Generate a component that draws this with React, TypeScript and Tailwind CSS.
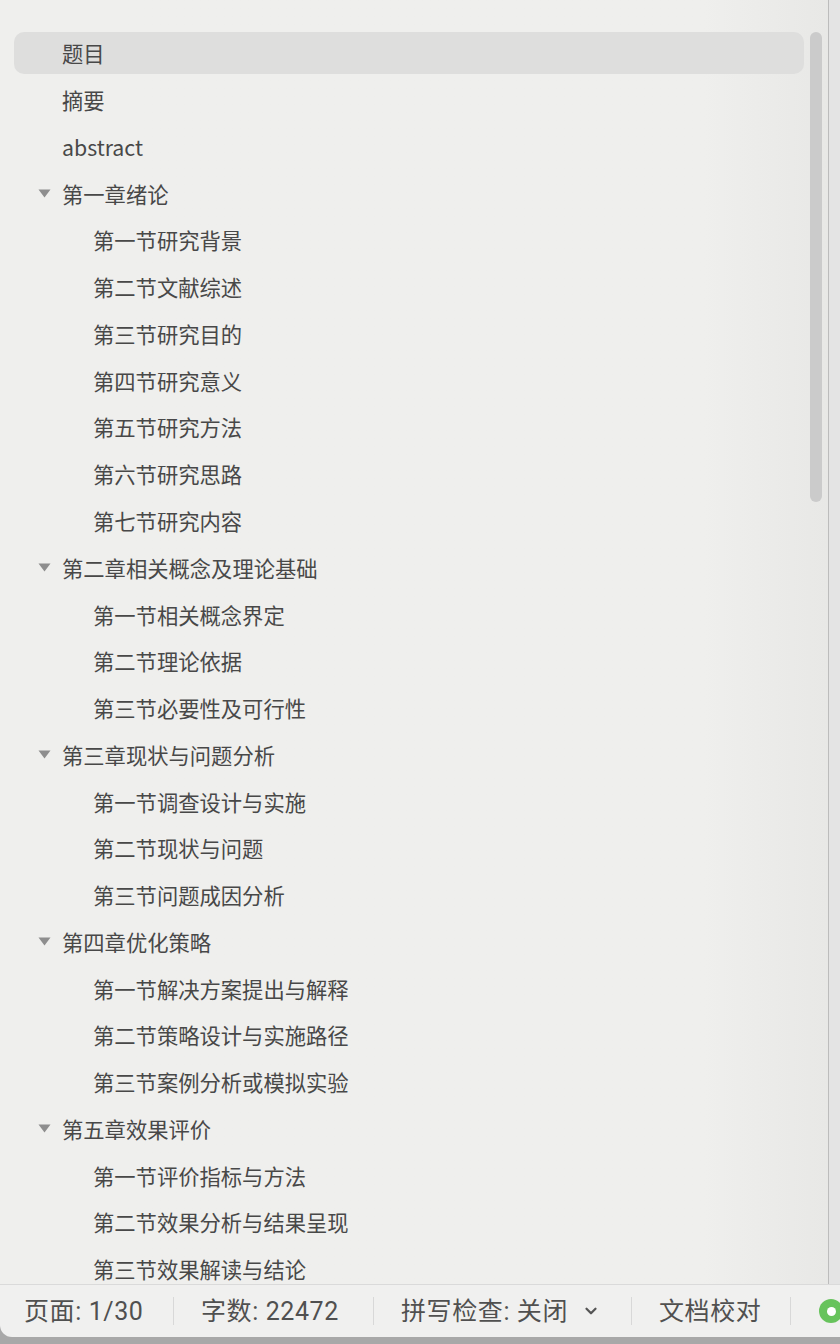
import { ChevronDown } from 'lucide-react';

type Item = { label: string; level: 0 | 1; chapter?: boolean };

const items: Item[] = [
  { label: '题目', level: 0 },
  { label: '摘要', level: 0 },
  { label: 'abstract', level: 0 },
  { label: '第一章绪论', level: 0, chapter: true },
  { label: '第一节研究背景', level: 1 },
  { label: '第二节文献综述', level: 1 },
  { label: '第三节研究目的', level: 1 },
  { label: '第四节研究意义', level: 1 },
  { label: '第五节研究方法', level: 1 },
  { label: '第六节研究思路', level: 1 },
  { label: '第七节研究内容', level: 1 },
  { label: '第二章相关概念及理论基础', level: 0, chapter: true },
  { label: '第一节相关概念界定', level: 1 },
  { label: '第二节理论依据', level: 1 },
  { label: '第三节必要性及可行性', level: 1 },
  { label: '第三章现状与问题分析', level: 0, chapter: true },
  { label: '第一节调查设计与实施', level: 1 },
  { label: '第二节现状与问题', level: 1 },
  { label: '第三节问题成因分析', level: 1 },
  { label: '第四章优化策略', level: 0, chapter: true },
  { label: '第一节解决方案提出与解释', level: 1 },
  { label: '第二节策略设计与实施路径', level: 1 },
  { label: '第三节案例分析或模拟实验', level: 1 },
  { label: '第五章效果评价', level: 0, chapter: true },
  { label: '第一节评价指标与方法', level: 1 },
  { label: '第二节效果分析与结果呈现', level: 1 },
  { label: '第三节效果解读与结论', level: 1 },
];

function Triangle() {
  return (
    <svg width="13" height="9" viewBox="0 0 13 9" className="shrink-0">
      <path d="M0.5 0.5 H12.5 L6.5 8.5 Z" fill="#8e8e8e" />
    </svg>
  );
}

function Sep() {
  return <div className="w-px h-[28px] shrink-0 bg-[#d8d8d8]" />;
}

export default function App() {
  return (
    <div
      className="w-[840px] h-[1344px] overflow-hidden flex flex-col bg-[#a8a8a8] text-[#484848]"
      style={{ fontFamily: '"Noto Sans CJK SC", "Noto Sans", sans-serif' }}
    >
      {/* Outline panel */}
      <div className="flex h-[1284px] overflow-hidden">
        <div className="relative w-[828px] bg-gradient-to-r from-[#efefed] from-[85%] to-[#e8e8e6]">
          <div className="flex flex-col gap-[4.77px] pt-[32px] pl-[14px] pr-[24px]">
            {items.map((it, i) => (
              <div
                key={i}
                className={
                  'h-[42px] shrink-0 flex items-center rounded-[10px] text-[21.3px] leading-none ' +
                  (i === 0 ? 'bg-[#dededd]' : '')
                }
              >
                <div className="w-[48px] flex justify-end pr-[11px]">
                  {it.chapter && <Triangle />}
                </div>
                <span className={it.level === 1 ? 'pl-[31px]' : ''}>{it.label}</span>
              </div>
            ))}
          </div>
          {/* scrollbar thumb */}
          <div className="absolute left-[810px] top-[32px] w-[12px] h-[470px] rounded-full bg-[#cbcbcb]" />
        </div>
        <div className="w-px bg-[#bcbcbc]" />
        <div className="flex-1 bg-[#e4e4e4]" />
      </div>

      {/* Status bar */}
      <div
        className="h-[53px] shrink-0 bg-[#f0f0ef] border-t border-[#dadada] rounded-bl-[12px] flex items-center text-[25px] leading-none tracking-[0.6px] text-[#505050]"
        style={{ fontFamily: 'Roboto, "Noto Sans CJK SC", sans-serif' }}
      >
        <div className="w-[173px] shrink-0 pl-[24px]">页面: 1/30</div>
        <Sep />
        <div className="w-[199px] shrink-0 pl-[27px]">字数: 22472</div>
        <Sep />
        <div className="w-[257px] shrink-0 pl-[27px] flex items-center">
          <span>拼写检查: 关闭</span>
          <ChevronDown size={18} strokeWidth={3} className="ml-[14px] text-[#555]" />
        </div>
        <Sep />
        <div className="w-[158px] shrink-0 pl-[27px]">文档校对</div>
        <Sep />
        <div className="ml-[28px] w-[24px] h-[24px] rounded-full bg-[#67c35c] flex items-center justify-center shrink-0">
          <div className="w-[9px] h-[9px] rounded-full bg-white" />
        </div>
      </div>
      <div className="flex-1" />
    </div>
  );
}
